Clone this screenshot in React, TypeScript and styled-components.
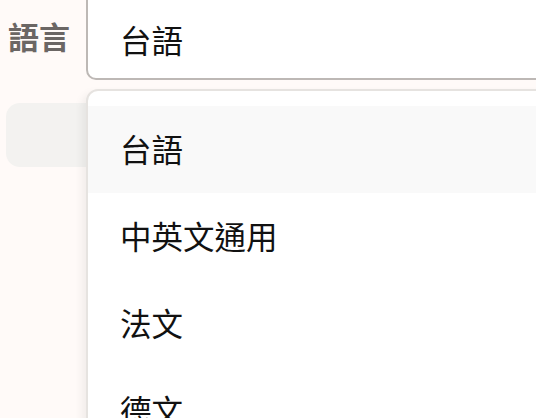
import React from "react";
import styled, { createGlobalStyle } from "styled-components";

const GlobalStyle = createGlobalStyle`
  html, body {
    margin: 0;
    padding: 0;
    background: #fffaf8;
    overflow: hidden;
  }
  body {
    font-family: "Noto Sans CJK TC", "Noto Sans", sans-serif;
  }
`;

const Page = styled.div`
  position: relative;
  width: 536px;
  height: 418px;
  overflow: hidden;
`;

const FieldRow = styled.div`
  display: flex;
  align-items: center;
  margin-top: -12px;
  padding-left: 8px;
`;

const Label = styled.div`
  width: 78px;
  flex-shrink: 0;
  font-size: 31px;
  font-weight: 700;
  color: #6b6664;
  line-height: 1;
  padding-top: 2px;
`;

const Input = styled.div`
  flex: 1;
  height: 92px;
  box-sizing: border-box;
  margin-right: -20px;
  background: #ffffff;
  border: 2px solid #bdb8b5;
  border-radius: 10px;
  display: flex;
  align-items: center;
  padding: 10px 0 0 32px;
  font-size: 31.5px;
  color: #111;
`;

const Below = styled.div`
  padding: 23px 0 0 6px;
`;

const GrayPill = styled.div`
  width: 140px;
  height: 64px;
  background: #f3f2f0;
  border-radius: 14px;
`;

const Menu = styled.div`
  position: absolute;
  left: 86px;
  top: 89px;
  width: 480px;
  height: 380px;
  box-sizing: border-box;
  background: #ffffff;
  border: 2px solid #e6e3e0;
  border-radius: 12px;
  padding-top: 15px;
  box-shadow: -4px 4px 8px rgba(0, 0, 0, 0.06);
`;

const Option = styled.div<{ $active?: boolean }>`
  height: 87px;
  display: flex;
  align-items: center;
  padding-left: 32px;
  padding-bottom: 3px;
  box-sizing: border-box;
  font-size: 31.5px;
  color: #111;
  background: ${(p) => (p.$active ? "#f9f9f9" : "transparent")};
`;

const options = ["台語", "中英文通用", "法文", "德文"];

export default function App() {
  return (
    <Page>
      <GlobalStyle />
      <FieldRow>
        <Label>語言</Label>
        <Input>台語</Input>
      </FieldRow>
      <Below>
        <GrayPill />
      </Below>
      <Menu>
        {options.map((o, i) => (
          <Option key={o} $active={i === 0}>
            {o}
          </Option>
        ))}
      </Menu>
    </Page>
  );
}
